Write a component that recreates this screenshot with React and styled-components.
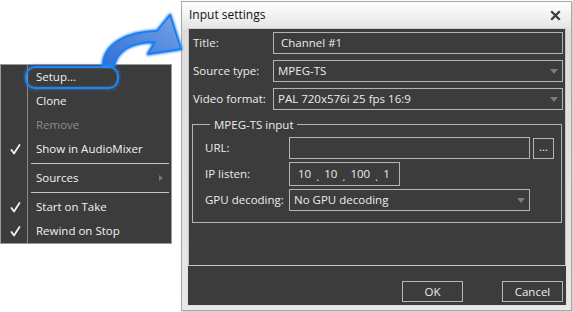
import React from "react";
import styled, { createGlobalStyle } from "styled-components";

const Global = createGlobalStyle`
  html, body { margin: 0; padding: 0; background: #ffffff; }
  body { font-family: "Open Sans", "Noto Sans", sans-serif; }
  * { box-sizing: border-box; }
`;

const Page = styled.div`
  position: relative;
  width: 573px;
  height: 312px;
  overflow: hidden;
  display: flex;
  align-items: flex-start;
  background: #fff;
`;

/* ---------- Context menu ---------- */
const Menu = styled.div`
  position: relative;
  margin-top: 64px;
  width: 172px;
  background: #3c3c3c;
  border: 1px solid #9a9a9a;
  display: flex;
  flex-direction: column;
  font-size: 11.5px;
  color: #f2f2f2;
  &::before {
    content: "";
    position: absolute;
    left: 26px;
    top: 0;
    bottom: 0;
    width: 1px;
    background: #8a8a8a;
  }
`;

const Item = styled.div`
  position: relative;
  height: 24px;
  display: flex;
  align-items: center;
  padding-left: 35px;
  padding-bottom: 1px;
  color: ${(p) => (p.$disabled ? "#8c8c8c" : "#f2f2f2")};
`;

const Check = styled.span`
  position: absolute;
  left: 7px;
  top: 0;
  height: 24px;
  width: 14px;
  display: flex;
  align-items: center;
  justify-content: center;
`;

const SubArrow = styled.span`
  position: absolute;
  right: 8px;
  top: 9px;
  width: 0;
  height: 0;
  border-top: 3.5px solid transparent;
  border-bottom: 3.5px solid transparent;
  border-left: 4px solid #7a7a7a;
`;

const Sep = styled.div`
  height: 5px;
  display: flex;
  align-items: center;
  padding-left: 30px;
  padding-right: 2px;
  &::after {
    content: "";
    flex: 1;
    height: 1px;
    background: #c4c4c4;
  }
`;

const Highlight = styled.span`
  position: absolute;
  left: 24px;
  top: 1px;
  width: 94px;
  height: 23px;
  border: 2.5px solid #1f86f2;
  border-radius: 10px;
  box-shadow: 0 0 3px 1px rgba(40, 120, 230, 0.55), inset 0 0 2px rgba(80, 160, 255, 0.6);
`;

/* ---------- Dialog ---------- */
const Dialog = styled.div`
  margin-left: 9px;
  margin-top: 1px;
  width: 391px;
  height: 310px;
  border: 1px solid #a8a8a8;
  background: linear-gradient(#ffffff 0px, #e4e4e4 27px, #dcdcdc 27px, #e8e8e8 100%);
  box-shadow: 1px 1px 2px rgba(0, 0, 0, 0.25);
  display: flex;
  flex-direction: column;
  padding: 0 4px 4px 5px;
`;

const TitleBar = styled.div`
  height: 26px;
  display: flex;
  align-items: center;
  justify-content: space-between;
  padding-left: 2px;
  padding-right: 6px;
  padding-bottom: 1px;
  font-size: 12px;
  color: #111;
`;

const CloseIcon = styled.svg`
  width: 11px;
  height: 11px;
  margin-top: 2px;
`;

const Body = styled.div`
  flex: 1;
  background: #3c3c3c;
  border: 1px solid #e0e0e0;
  border-top-color: #cfcfcf;
  display: flex;
  flex-direction: column;
  color: #ececec;
  font-size: 11.5px;
`;

const MainPanel = styled.div`
  height: 237px;
  border: 1px solid #c4c4c4;
  border-top: none;
  padding: 3px 2px 0 4px;
  display: flex;
  flex-direction: column;
  gap: 6px;
`;

const Row = styled.div`
  display: flex;
  align-items: center;
  height: ${(p) => p.$h || 22}px;
`;

const Label = styled.div`
  width: ${(p) => p.$w}px;
  flex: none;
  padding-bottom: 1px;
`;

const Field = styled.div`
  position: relative;
  width: ${(p) => (p.$w ? `${p.$w}px` : "auto")};
  flex: ${(p) => (p.$w ? "none" : "1")};
  height: 100%;
  border: 1px solid #b4b4b4;
  background: #3c3c3c;
  display: flex;
  align-items: center;
  padding-left: ${(p) => p.$pad || 4}px;
  padding-bottom: 1px;
  white-space: nowrap;
`;

const DropArrow = styled.span`
  position: absolute;
  right: 4px;
  top: 50%;
  margin-top: -2px;
  width: 0;
  height: 0;
  border-left: 4px solid transparent;
  border-right: 4px solid transparent;
  border-top: 5px solid #7c7c7c;
`;

const Group = styled.fieldset`
  margin: 1px 1px 0 -1px;
  padding: 5px 0 11px 12px;
  border: 1px solid #b4b4b4;
  display: flex;
  flex-direction: column;
  gap: 3px;
  min-width: 0;
`;

const Legend = styled.legend`
  padding: 0 4px;
  margin-left: 5px;
  font-size: 11.5px;
  color: #ececec;
`;

const Dots = styled.div`
  width: 21px;
  height: 21px;
  margin-left: 3px;
  border: 1px solid #b4b4b4;
  display: flex;
  align-items: center;
  justify-content: center;
  padding-bottom: 3px;
  font-size: 11.5px;
`;

const IpDot = styled.span`
  margin: 0 5px;
  position: relative;
  top: 3px;
`;

const Footer = styled.div`
  flex: 1;
  display: flex;
  justify-content: flex-end;
  align-items: flex-start;
  padding: 15px 3px 0 0;
  gap: 39px;
`;

const Button = styled.div`
  width: 61px;
  height: 21px;
  border: 1px solid #b8b8b8;
  display: flex;
  align-items: center;
  justify-content: center;
  padding-bottom: 1px;
  font-size: 11.5px;
  color: #ececec;
`;

const ArrowSvg = styled.svg`
  position: absolute;
  left: 0;
  top: 0;
  width: 573px;
  height: 312px;
  pointer-events: none;
`;

const CheckMark = () => (
  <svg width="11" height="11" viewBox="0 0 11 11">
    <path d="M1.5 6 L4 9.5 L9.5 1" fill="none" stroke="#f4f4f4" strokeWidth="1.8" strokeLinecap="round" strokeLinejoin="round" />
  </svg>
);

export default function App() {
  return (
    <>
      <Global />
      <Page>
        <Menu>
          <Item>
            Setup...
            <Highlight />
          </Item>
          <Item>Clone</Item>
          <Item $disabled>Remove</Item>
          <Item>
            <Check><CheckMark /></Check>
            Show in AudioMixer
          </Item>
          <Sep />
          <Item>
            Sources
            <SubArrow />
          </Item>
          <Sep />
          <Item>
            <Check><CheckMark /></Check>
            Start on Take
          </Item>
          <Item>
            <Check><CheckMark /></Check>
            Rewind on Stop
          </Item>
        </Menu>

        <Dialog>
          <TitleBar>
            <span>Input settings</span>
            <CloseIcon viewBox="0 0 11 11">
              <path d="M2 2 L9 9 M9 2 L2 9" stroke="#3a3a3a" strokeWidth="2.2" strokeLinecap="square" />
            </CloseIcon>
          </TitleBar>
          <Body>
            <MainPanel>
              <Row>
                <Label $w={80}>Title:</Label>
                <Field $pad={7}>Channel #1</Field>
              </Row>
              <Row>
                <Label $w={80}>Source type:</Label>
                <Field>MPEG-TS<DropArrow /></Field>
              </Row>
              <Row>
                <Label $w={80}>Video format:</Label>
                <Field>PAL 720x576i 25 fps 16:9<DropArrow /></Field>
              </Row>
              <Group>
                <Legend>MPEG-TS input</Legend>
                <Row>
                  <Label $w={84}>URL:</Label>
                  <Field $w={241} />
                  <Dots>...</Dots>
                </Row>
                <Row $h={24}>
                  <Label $w={84}>IP listen:</Label>
                  <Field $w={111} $pad={8}>
                    10<IpDot>.</IpDot>10<IpDot>.</IpDot>100<IpDot>.</IpDot>1
                  </Field>
                </Row>
                <Row>
                  <Label $w={84}>GPU decoding:</Label>
                  <Field $w={241}>No GPU decoding<DropArrow /></Field>
                </Row>
              </Group>
            </MainPanel>
            <Footer>
              <Button>OK</Button>
              <Button>Cancel</Button>
            </Footer>
          </Body>
        </Dialog>

        <ArrowSvg viewBox="0 0 573 312">
          <defs>
            <linearGradient id="arrowFill" x1="0" y1="1" x2="1" y2="0">
              <stop offset="0" stopColor="#2f6fd6" />
              <stop offset="0.6" stopColor="#5b8fe0" />
              <stop offset="1" stopColor="#7aa2e6" />
            </linearGradient>
            <filter id="glow" x="-20%" y="-20%" width="140%" height="140%">
              <feGaussianBlur stdDeviation="1.2" />
            </filter>
          </defs>
          <path
            d="M103 65 C104 44 126 32 157 31 L170 15 L181 49 L148 54 L155 42 C131 42 118 50 114 65 Z"
            fill="none"
            stroke="#3c8cf0"
            strokeWidth="3.5"
            strokeLinejoin="round"
            filter="url(#glow)"
          />
          <path
            d="M103 65 C104 44 126 32 157 31 L170 15 L181 49 L148 54 L155 42 C131 42 118 50 114 65 Z"
            fill="url(#arrowFill)"
            stroke="#1a7ff2"
            strokeWidth="1.8"
            strokeLinejoin="round"
          />
        </ArrowSvg>
      </Page>
    </>
  );
}
